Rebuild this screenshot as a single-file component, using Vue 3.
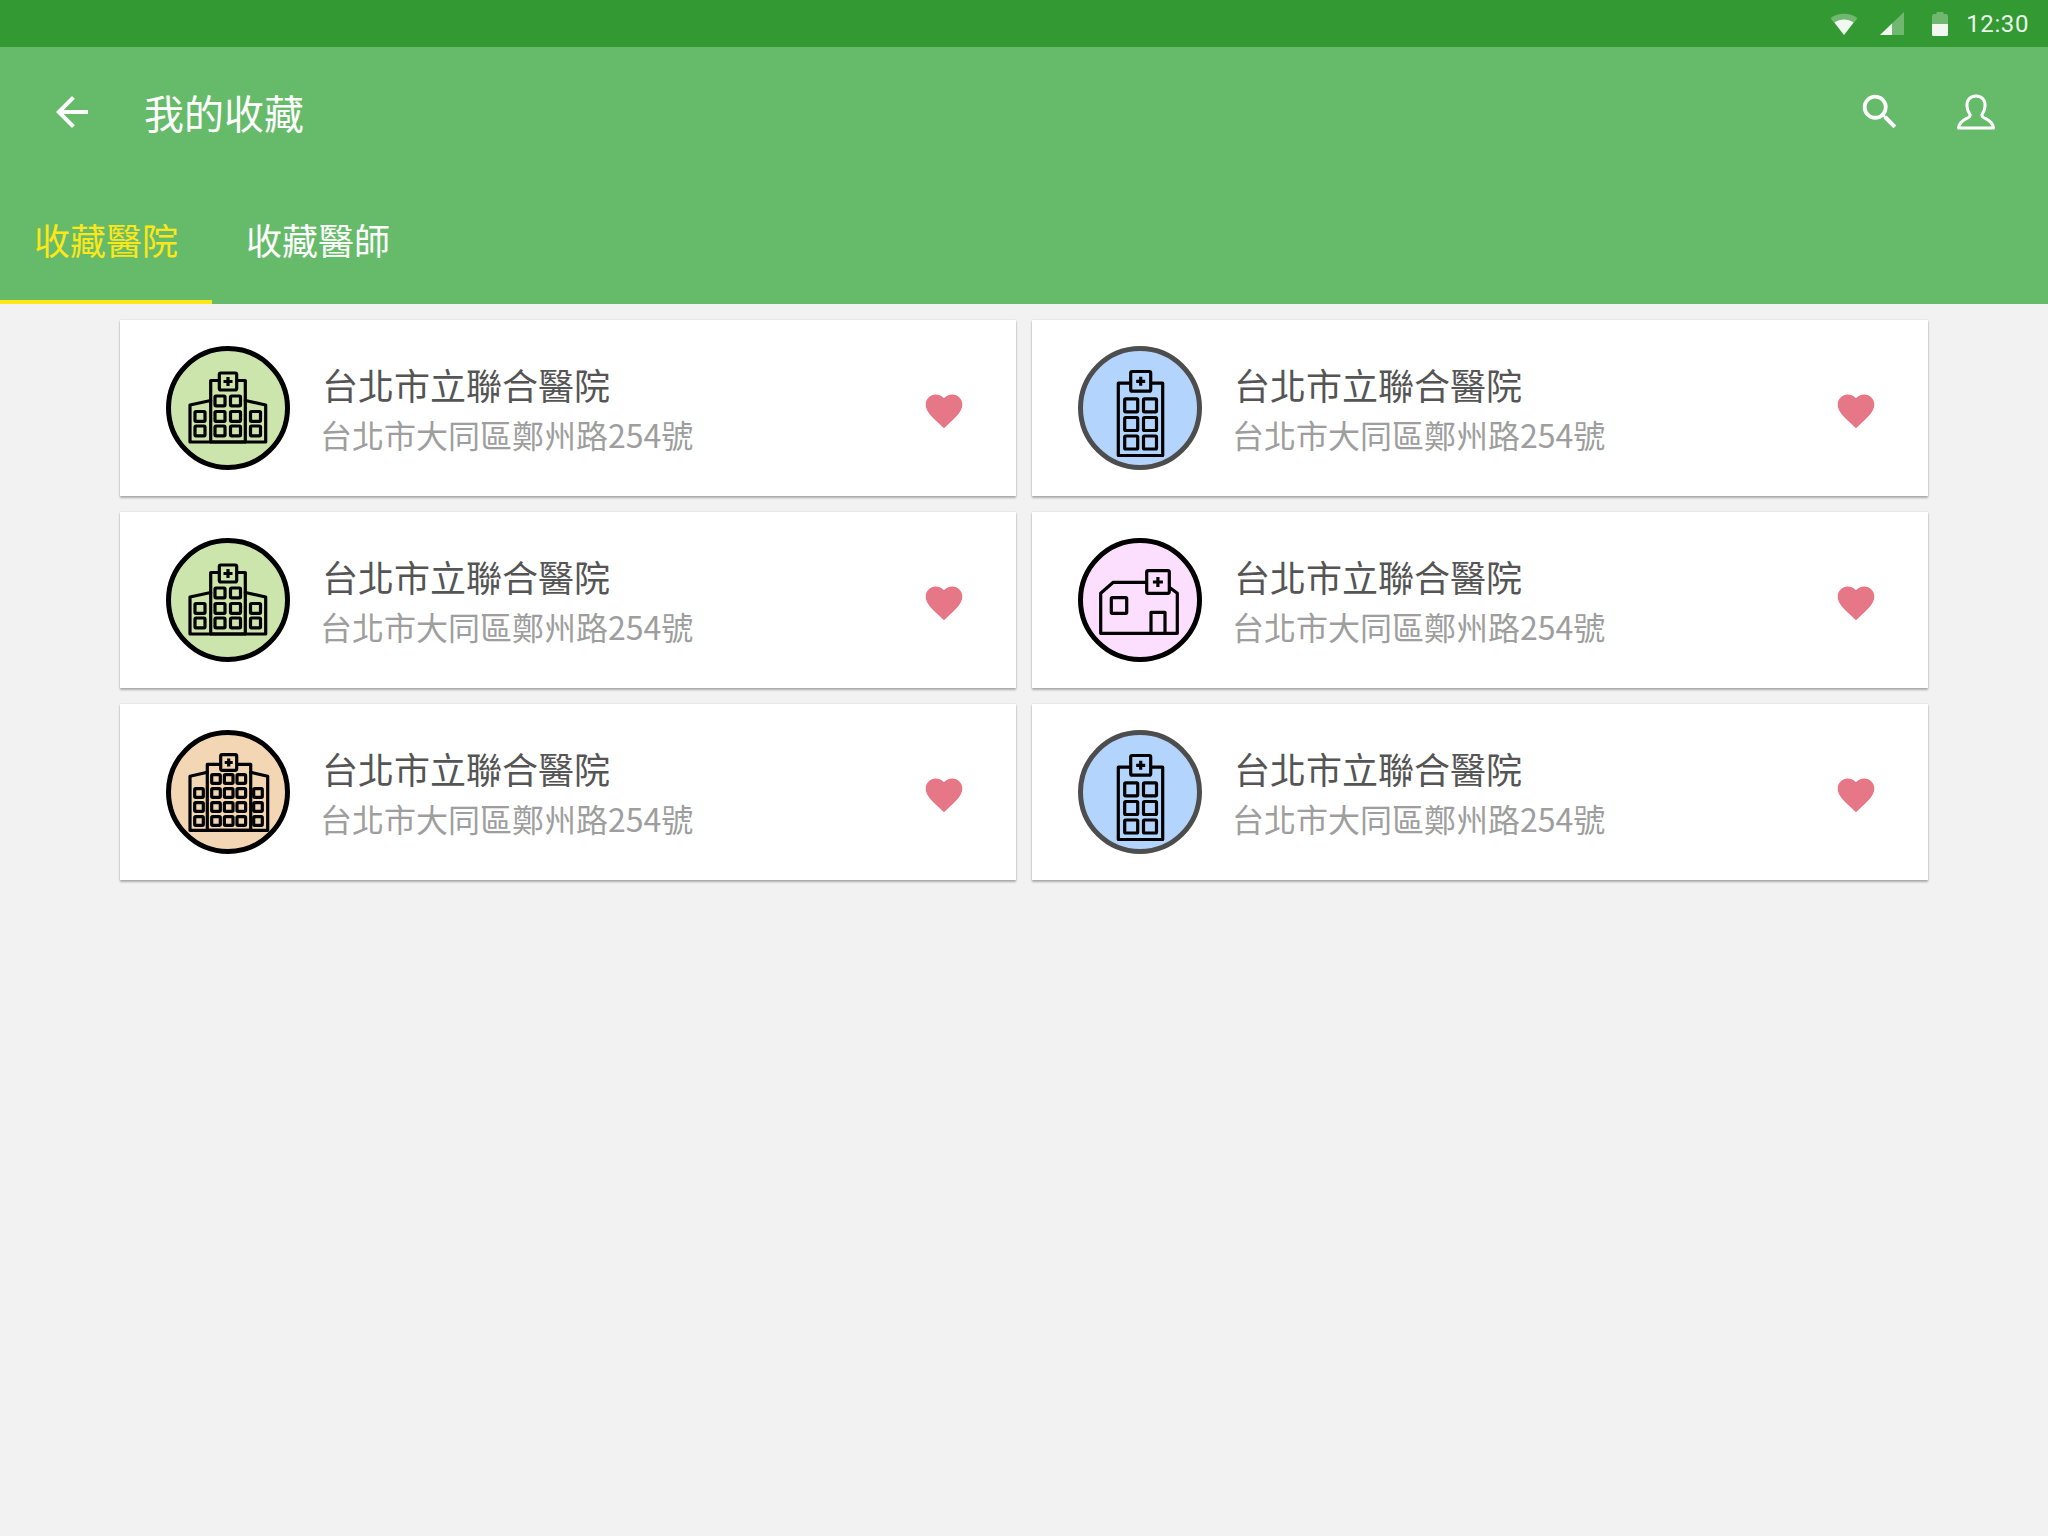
<script setup>
const rect = (x, y, w, h) => ({ x, y, w, h })
const grid = (xs, ys, w, h) => ys.flatMap(y => xs.map(x => rect(x, y, w, h)))

const icons = {
  green: {
    fill: '#cce5ad', ring: '#000000',
    paths: ['M44.7 96V34.5H79.3V96Z', 'M44.7 54.5L24 59V96H99.7V59L79.3 54.5'],
    box: rect(53.3, 27, 17.4, 17), cross: [62, 35.5, 4.5],
    windows: [...grid([49, 64.5], [50, 65.5, 80], 10, 9.8), ...grid([29, 84.5], [65.5, 80], 10, 9.8)]
  },
  blue: {
    fill: '#b3d4fc', ring: '#4d4d4d',
    paths: ['M40.3 37.2H84.7V109.5H40.3Z'],
    box: rect(52.7, 25.5, 20, 19.7), cross: [62.7, 35.3, 4.5],
    windows: grid([46.7, 65.5], [52.8, 71.5, 90], 13, 13)
  },
  pink: {
    fill: '#fcdfff', ring: '#000000',
    paths: ['M68.7 44.3H35.3L22.7 55.3V95.3H99.3V55.3L91.3 49.3', 'M73 95.3V74.3H87V95.3'],
    box: rect(68.7, 32.7, 22.6, 22.6), cross: [79.9, 44, 5],
    windows: [rect(33.3, 59.7, 15.4, 15.6)]
  },
  orange: {
    fill: '#f3d7b5', ring: '#000000',
    paths: ['M41.3 100.3V34.3H84.7V100.3Z', 'M41.3 42.3L24 46.3V100.3H101.7V46.3L84.7 42.3'],
    box: rect(54.7, 24.6, 16, 15.7), cross: [62.7, 32.5, 4],
    windows: [...grid([45.7, 58.4, 71], [44.7, 58.7, 72.7, 86.7], 8.6, 8.6), ...grid([28.7, 87.7], [58.7, 72.7, 86.7], 8.6, 8.6)]
  }
}

const cards = ['green', 'blue', 'green', 'pink', 'orange', 'blue'].map((kind, id) => ({
  id,
  icon: icons[kind],
  name: '台北市立聯合醫院',
  address: '台北市大同區鄭州路254號'
}))
</script>

<template>
  <div class="page">
    <div class="status">
      <svg class="wifi" width="28" height="22" viewBox="0 0 28 22">
        <path d="M0.5 5.2C8 -0.6 20 -0.6 27.5 5.2L14 22Z" fill="#fff" fill-opacity=".3" />
        <path d="M4.5 9.5C10 5.6 18 5.6 23.5 9.5L14 22Z" fill="#fff" fill-opacity=".9" />
      </svg>
      <svg class="signal" width="24" height="23" viewBox="0 0 24 23">
        <path d="M0 23L24 0V23Z" fill="#fff" fill-opacity=".3" />
        <path d="M0 23L12 11.5V23Z" fill="#fff" fill-opacity=".9" />
      </svg>
      <svg class="battery" width="16" height="24" viewBox="0 0 16 24">
        <path d="M0 4Q0 2 2 2H4.5V0H11.5V2H14Q16 2 16 4V24H0Z" fill="#fff" fill-opacity=".3" />
        <path d="M0 12H16V22.5Q16 24 14 24H2Q0 24 0 22.5Z" fill="#fff" fill-opacity=".9" />
      </svg>
      <span class="time">12:30</span>
    </div>

    <header class="appbar">
      <div class="toolbar">
        <svg class="back" width="48" height="48" viewBox="0 0 24 24">
          <path d="M20 11H7.83l5.59-5.59L12 4l-8 8 8 8 1.41-1.41L7.83 13H20z" fill="#fff" />
        </svg>
        <h1 class="title">我的收藏</h1>
        <svg class="search" width="46" height="46" viewBox="0 0 24 24">
          <path d="M15.5 14h-.79l-.28-.27A6.47 6.47 0 0 0 16 9.5 6.5 6.5 0 1 0 9.5 16c1.61 0 3.09-.59 4.23-1.57l.27.28v.79l5 4.99L20.49 19l-4.99-5zm-6 0C7.01 14 5 11.99 5 9.5S7.01 5 9.5 5 14 7.01 14 9.5 11.99 14 9.5 14z" fill="#fff" />
        </svg>
        <svg class="person" width="40" height="36" viewBox="0 0 40 36">
          <path d="M20 2C13.5 2 10.5 7 11 12.5C11.3 15.5 12 17.5 13.5 19.5C14.5 21 14 22.5 12.5 23.5C9 25.5 3.5 27 2.5 34H37.5C36.5 27 31 25.5 27.5 23.5C26 22.5 25.5 21 26.5 19.5C28 17.5 28.7 15.5 29 12.5C29.5 7 26.500 2 20 2Z" fill="none" stroke="#fff" stroke-width="3" stroke-linejoin="round" />
        </svg>
      </div>
      <nav class="tabs">
        <div class="tab active">收藏醫院</div>
        <div class="tab">收藏醫師</div>
      </nav>
    </header>

    <main class="list">
      <article v-for="card in cards" :key="card.id" class="card">
        <svg class="avatar" width="124" height="124" viewBox="0 0 124 124">
          <circle cx="62" cy="62" r="59.500" :fill="card.icon.fill" :stroke="card.icon.ring" stroke-width="5" />
          <g fill="none" stroke="#000" stroke-width="3.200" stroke-linejoin="round" stroke-linecap="round">
            <path v-for="d in card.icon.paths" :key="d" :d="d" />
            <rect
              v-for="(w, i) in card.icon.windows"
              :key="i"
              :x="w.x"
              :y="w.y"
              :width="w.w"
              :height="w.h"
              rx="1"
            />
            <rect
              :x="card.icon.box.x"
              :y="card.icon.box.y"
              :width="card.icon.box.w"
              :height="card.icon.box.h"
              :fill="card.icon.fill"
              rx="1.500"
            />
            <path
              :d="`M${card.icon.cross[0] - card.icon.cross[2]} ${card.icon.cross[1]}h${card.icon.cross[2] * 2}M${card.icon.cross[0]} ${card.icon.cross[1] - card.icon.cross[2]}v${card.icon.cross[2] * 2}`"
              stroke-linecap="butt"
            />
          </g>
        </svg>
        <div class="info">
          <div class="name">{{ card.name }}</div>
          <div class="address">{{ card.address }}</div>
        </div>
        <svg class="heart" width="44" height="44" viewBox="0 0 24 24">
          <path d="M12 21.35l-1.45-1.32C5.4 15.36 2 12.28 2 8.5 2 5.42 4.42 3 7.5 3c1.740 0 3.410.81 4.500 2.090C13.090 3.810 14.760 3 16.500 3 19.580 3 22 5.420 22 8.500c0 3.780-3.400 6.860-8.550 11.540L12 21.350z" fill="#e57786" />
        </svg>
      </article>
    </main>
  </div>
</template>

<style>
html, body {
  margin: 0;
  background: #f2f2f2;
}
</style>

<style scoped>
.page {
  min-height: 1536px;
  background: #f2f2f2;
  font-family: "Noto Sans CJK TC", "Noto Sans", sans-serif;
}
.status {
  height: 47px;
  background: #339933;
  display: flex;
  align-items: center;
  justify-content: flex-end;
  padding-right: 19px;
  box-sizing: border-box;
}
.wifi { margin-right: 22px; }
.signal { margin-right: 28px; }
.battery { margin-right: 18px; }
.time {
  font-family: Roboto, sans-serif;
  font-size: 24px;
  color: #e8f5e9;
  letter-spacing: 0.6px;
}
.appbar {
  background: #66bb6a;
  height: 257px;
  display: flex;
  flex-direction: column;
}
.toolbar {
  height: 129px;
  display: flex;
  align-items: center;
  padding: 0 52px 0 48px;
  box-sizing: border-box;
}
.title {
  margin: 0 auto 0 48px;
  font-size: 40px;
  font-weight: 400;
  color: #fff;
}
.person { margin-left: 53px; }
.tabs {
  flex: 1;
  display: flex;
}
.tab {
  width: 212px;
  box-sizing: border-box;
  padding-top: 37px;
  text-align: center;
  font-size: 36px;
  line-height: 52px;
  color: #fff;
  border-bottom: 4px solid transparent;
}
.tab.active {
  color: #fde619;
  border-bottom-color: #fde619;
}
.list {
  padding: 16px 120px;
  display: grid;
  grid-template-columns: 1fr 1fr;
  gap: 16px;
}
.card {
  height: 176px;
  background: #fff;
  display: flex;
  align-items: center;
  padding: 0 50px 0 46px;
  box-sizing: border-box;
  box-shadow: 0 2px 2px rgba(0, 0, 0, 0.28), 0 0 2px rgba(0, 0, 0, 0.12);
}
.info {
  flex: 1;
  margin-left: 32px;
  margin-top: -1px;
}
.name {
  font-size: 36px;
  line-height: 52px;
  color: #555;
}
.address {
  font-size: 32px;
  line-height: 48px;
  color: #9e9e9e;
  margin-left: -2px;
}
.heart {
  margin-top: 5px;
}
</style>
